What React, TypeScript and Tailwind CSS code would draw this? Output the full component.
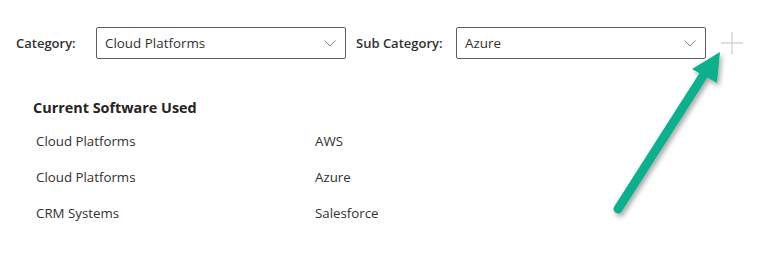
import React from "react";

function Chevron() {
  return (
    <svg width="12" height="7" viewBox="0 0 12 7" className="shrink-0">
      <path d="M0.5 0.5 L6 6 L11.5 0.5" fill="none" stroke="#8a8a8a" strokeWidth="1" />
    </svg>
  );
}

function Select({ value }: { value: string }) {
  return (
    <div className="flex h-[32px] w-[250px] items-center justify-between border border-[#605e5c] rounded-[2px] bg-white pl-[8px] pr-[9px]">
      <span className="text-[13.4px] text-[#323130]">{value}</span>
      <Chevron />
    </div>
  );
}

export default function App() {
  const rows = [
    ["Cloud Platforms", "AWS"],
    ["Cloud Platforms", "Azure"],
    ["CRM Systems", "Salesforce"],
  ];
  return (
    <div
      className="relative h-[265px] w-[768px] bg-white text-[#323130]"
      style={{ fontFamily: '"Open Sans", "Noto Sans", sans-serif' }}
    >
      <div className="flex items-center pl-[16px] pt-[27px]">
        <span className="text-[13px] font-semibold w-[80px] pt-[1px]">Category:</span>
        <Select value="Cloud Platforms" />
        <span className="ml-[10px] text-[13px] font-semibold w-[100px] pt-[1px]">Sub Category:</span>
        <Select value="Azure" />
        <svg width="24" height="24" viewBox="0 0 24 24" className="ml-[14px]">
          <path d="M12 1 V23 M1 12 H23" stroke="#d6d6d6" strokeWidth="1.5" />
        </svg>
      </div>
      <div className="pl-[33px] pt-[38px]">
        <div className="text-[14.4px] font-bold text-[#252423]">Current Software Used</div>
        <div className="mt-[5px] flex flex-col">
          {rows.map(([a, b], i) => (
            <div key={i} className="flex h-[36px] items-center pl-[3px] text-[13.3px]">
              <span className="w-[279px]">{a}</span>
              <span>{b}</span>
            </div>
          ))}
        </div>
      </div>
      <svg className="absolute left-0 top-0 pointer-events-none" width="768" height="265" viewBox="0 0 768 265">
        <defs>
          <filter id="sh" x="-20%" y="-20%" width="140%" height="140%">
            <feDropShadow dx="2" dy="3" stdDeviation="2.5" floodColor="#000" floodOpacity="0.35" />
          </filter>
        </defs>
        <g filter="url(#sh)">
          <line x1="618" y1="209" x2="703" y2="76" stroke="#0fb08d" strokeWidth="9" strokeLinecap="round" />
          <polygon points="720,52 692,69 717,83" fill="#0fb08d" />
        </g>
      </svg>
    </div>
  );
}
